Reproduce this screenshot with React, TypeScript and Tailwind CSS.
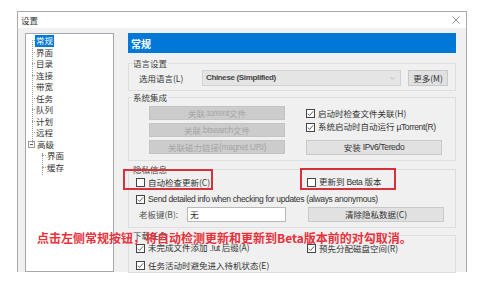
import { ReactNode } from 'react'

const ui = "font-['Noto_Sans_CJK_SC',sans-serif]"
const latin = "font-['Liberation_Sans','Noto_Sans_CJK_SC',sans-serif] tracking-[-0.35px]"

function Check({ checked, label }: { checked?: boolean; label: ReactNode }) {
  return (
    <div className="flex items-center gap-[3px] h-[14px] text-[8.5px] text-[#333]">
      <span className="w-[9px] h-[9px] border border-[#444] bg-white flex items-center justify-center shrink-0">
        {checked && (
          <svg viewBox="0 0 8 8" className="w-[7px] h-[7px]">
            <path d="M1 4.2 L3 6.2 L7 1.5" fill="none" stroke="#333" strokeWidth="0.9" />
          </svg>
        )}
      </span>
      <span className="whitespace-nowrap">{label}</span>
    </div>
  )
}

function Group({ title, children, className = '' }: { title: string; children: ReactNode; className?: string }) {
  return (
    <fieldset className={`border border-[#dedede] ${className}`}>
      <legend className="ml-[3px] px-[1px] text-[8.5px] leading-[12px] text-[#444]">{title}</legend>
      {children}
    </fieldset>
  )
}

function DisabledBtn({ children }: { children: ReactNode }) {
  return (
    <div className="h-[14px] bg-[#cccccc] border border-[#c4c4c4] flex items-center justify-center text-[8.5px] text-[#a6a6a6] whitespace-nowrap">
      {children}
    </div>
  )
}

function Btn({ children, className = '' }: { children: ReactNode; className?: string }) {
  return (
    <div className={`h-[15px] bg-[#e1e1e1] border border-[#c9c9c9] flex items-center justify-center text-[8.5px] text-[#333] whitespace-nowrap ${className}`}>
      {children}
    </div>
  )
}

const treeTop = ['常规', '界面', '目录', '连接', '带宽', '任务', '队列', '计划', '远程']

export default function App() {
  return (
    <div className={`relative w-[486px] h-[285px] bg-white overflow-hidden pt-[11px] pl-[17px] ${ui}`}>
      <div className="w-[450px] h-[261px] border-t border-l border-r border-[#a9a9a9] flex flex-col">
        {/* title bar */}
        <div className="h-[16px] bg-white flex items-center justify-between pl-[3px] pr-[6px] shrink-0">
          <span className="text-[8.5px] text-[#333]">设置</span>
          <svg viewBox="0 0 8 8" className="w-[8px] h-[8px]">
            <path d="M0.5 0.5 L7.5 7.5 M7.5 0.5 L0.5 7.5" stroke="#666" strokeWidth="0.7" />
          </svg>
        </div>

        <div className="flex-1 bg-[#f0f0f0] flex pt-[5px] pl-[7px] pr-[10px] gap-[14px] min-h-0">
          {/* tree */}
          <div className="relative w-[89px] bg-white border border-[#a3a8ae] pt-[1px] text-[8.5px] text-[#333] leading-[11.5px]">
            <span className="absolute left-[6px] top-[6px] h-[103px] border-l border-dotted border-[#9a9a9a]" />
            <span className="absolute left-[16px] top-[119px] h-[22px] border-l border-dotted border-[#9a9a9a]" />
            {treeTop.map((t, i) => (
              <div key={t} className="flex items-center h-[11.5px] pl-[6px]">
                <span className="w-[3px] border-t border-dotted border-[#9a9a9a]" />
                <span className={i === 0 ? 'bg-[#0078d7] text-white px-[1px]' : 'px-[1px]'}>{t}</span>
              </div>
            ))}
            <div className="flex items-center h-[11.5px] pl-[2px]">
              <span className="w-[7px] h-[7px] border border-[#9a9a9a] bg-white flex items-center justify-center mr-[1px]">
                <span className="w-[3px] border-t border-[#555]" />
              </span>
              <span className="px-[1px]">高级</span>
            </div>
            {['界面', '缓存'].map((t) => (
              <div key={t} className="flex items-center h-[11.5px] pl-[16px]">
                <span className="w-[4px] border-t border-dotted border-[#9a9a9a]" />
                <span className="px-[1px]">{t}</span>
              </div>
            ))}
          </div>

          {/* settings page */}
          <div className="flex-1 flex flex-col min-w-0">
            <div className="h-[20px] bg-[#0078d7] text-white font-bold text-[10px] flex items-center pl-[3px] shrink-0">常规</div>

            <Group title="语言设置" className="mt-[4px]">
              <div className="flex items-center h-[16px] mt-[1px] mb-[4px] pl-[10px]">
                <span className="w-[63px] text-[8.5px] text-[#333]">选用语言(L)</span>
                <div className="w-[199px] h-[16px] bg-[#e5e5e5] border border-[#d2d2d2] flex items-center justify-between pl-[3px] pr-[5px]">
                  <span className={`text-[8px] font-semibold text-[#444] ${latin}`}>Chinese (Simplified)</span>
                  <svg viewBox="0 0 6 4" className="w-[5px] h-[3px]">
                    <path d="M0.5 0.5 L3 3 L5.5 0.5" fill="none" stroke="#999" strokeWidth="0.7" />
                  </svg>
                </div>
                <Btn className="ml-[7px] w-[40px] h-[16px]">更多(M)</Btn>
              </div>
            </Group>

            <Group title="系统集成">
              <div className="flex gap-[21px] pl-[20px] pt-[3px] pb-[5px]">
                <div className="w-[136px] flex flex-col gap-[3px]">
                  <DisabledBtn>
                    关联 <span className={latin}>.torrent</span> 文件
                  </DisabledBtn>
                  <DisabledBtn>
                    关联 <span className={latin}>.btsearch</span> 文件
                  </DisabledBtn>
                  <DisabledBtn>
                    关联磁力链接<span className={latin}>(magnet URI)</span>
                  </DisabledBtn>
                </div>
                <div className="w-[136px] flex flex-col">
                  <Check checked label="启动时检查文件关联(H)" />
                  <Check checked label={<>系统启动时自动运行 <span className={latin}>µTorrent(R)</span></>} />
                  <Btn className="mt-[6px] h-[14px]">
                    安装 <span className={latin}>&nbsp;IPv6/Teredo</span>
                  </Btn>
                </div>
              </div>
            </Group>

            <Group title="隐私信息" className="mt-[2px]">
              <div className="flex flex-col pl-[7px] pb-[5px]">
                <div className="flex h-[14px]">
                  <div className="w-[171px]">
                    <Check label="自动检查更新(C)" />
                  </div>
                  <Check label={<>更新到 <span className={latin}>Beta</span> 版本</>} />
                </div>
                <div className="mt-[3px]">
                  <Check checked label={<span className={latin}>Send detailed info when checking for updates (always anonymous)</span>} />
                </div>
                <div className="flex items-center h-[15px] mt-[1px]">
                  <span className="w-[51px] pl-[3px] text-[8.5px] text-[#555]">老板键(B):</span>
                  <div className="w-[99px] h-[15px] bg-white border border-[#b8b8b8] text-[8.5px] text-[#333] pl-[2px] flex items-center">无</div>
                  <Btn className="ml-[22px] w-[136px] h-[14px]">清除隐私数据(C)</Btn>
                </div>
              </div>
            </Group>

            <Group title="下载任务" className="mt-[1px] flex-1">
              <div className="flex flex-col pl-[7px]">
                <div className="flex h-[14px]">
                  <div className="w-[171px]">
                    <Check checked label={<>未完成文件添加 <span className={latin}>.!ut</span> 后缀(A)</>} />
                  </div>
                  <Check checked label="预先分配磁盘空间(R)" />
                </div>
                <div className="mt-[3px]">
                  <Check checked label="任务活动时避免进入待机状态(E)" />
                </div>
              </div>
            </Group>
          </div>
        </div>
      </div>

      {/* annotation overlays */}
      <div className="absolute left-[123px] top-[169px] w-[90px] h-[21px] border-2 border-[#d7323c]" />
      <div className="absolute left-[300px] top-[168px] w-[96px] h-[22px] border-2 border-[#d7323c]" />
      <div className="absolute left-[37px] top-[230px] text-[12px] leading-[16px] font-bold text-[#e8323c] whitespace-nowrap">
        点击左侧常规按钮，将自动检测更新和更新到Beta版本前的对勾取消。
      </div>
    </div>
  )
}
